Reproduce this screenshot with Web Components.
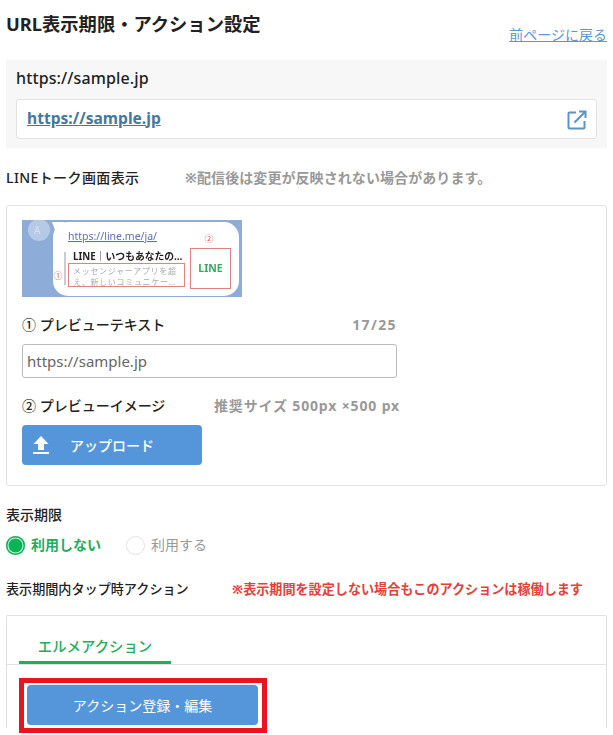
<!DOCTYPE html>
<html lang="ja">
<head>
<meta charset="utf-8">
<title>URL表示期限・アクション設定</title>
<style>
    html, body { margin: 0; background: #fff; }
    body {
        font-family: "Noto Sans", "Noto Sans CJK JP", sans-serif;
        color: #222;
        height: 735px;
        overflow: hidden;
    }
</style>
</head>
<body>
<url-settings></url-settings>
<script>
const FONT = '"Noto Sans", "Noto Sans CJK JP", sans-serif';

class PageHeader extends HTMLElement {
    constructor() {
        super();
        const shadow = this.attachShadow({ mode: 'open' });
        shadow.innerHTML = `
        <style>
            :host { display: flex; justify-content: space-between; height: 60px; }
            h1 { margin: 11px 0 0; font-size: 18.300px; line-height: 26px; font-weight: 700; color: #222; white-space: nowrap; }
            a { margin-top: 24px; font-size: 14px; line-height: 22px; color: #5b96d6; text-decoration: underline; }
        </style>
        <h1><slot></slot></h1>
        <a href="#">前ページに戻る</a>
        `;
    }
}

class UrlBox extends HTMLElement {
    constructor() {
        super();
        const shadow = this.attachShadow({ mode: 'open' });
        shadow.innerHTML = `
        <style>
            :host { display: block; background: #f7f7f7; height: 88px; padding: 0 10px; box-sizing: border-box; }
            .name { height: 39px; font-size: 16px; line-height: 36px; font-weight: 500; color: #222; letter-spacing: .12px; }
            .box { height: 40px; box-sizing: border-box; background: #fff; border: 1px solid #e2e2e2; border-radius: 3px;
                   display: flex; justify-content: space-between; align-items: center; padding: 0 9px 0 10px; }
            a { font-size: 15.600px; font-weight: 700; color: #44799f; text-decoration: underline; margin-top: -3px; }
            svg { display: block; margin-top: 2px; }
        </style>
        <div class="name"><slot></slot></div>
        <div class="box">
            <a href="#">https://sample.jp</a>
            <svg width="20" height="20" viewBox="0 0 20 20" fill="none" stroke="#5b93c9" stroke-width="2">
                <path d="M9 2.500H2.500a1 1 0 0 0-1 1V17.500a1 1 0 0 0 1 1H16.500a1 1 0 0 0 1-1V11"/>
                <path d="M12 1.500H18.500V8M18 2L7.500 12.500"/>
            </svg>
        </div>
        `;
    }
}

class SectionLabel extends HTMLElement {
    static get observedAttributes() { return ['note']; }
    constructor() {
        super();
        const shadow = this.attachShadow({ mode: 'open' });
        shadow.innerHTML = `
        <style>
            :host { display: flex; align-items: center; font-size: var(--label-size, 14px); font-weight: 500; color: #222; white-space: nowrap; }
            .label { width: var(--label-width, auto); letter-spacing: var(--label-spacing, 0); }
            .note { font-weight: 700; color: var(--note-color, #999); letter-spacing: var(--note-spacing, 0); }
        </style>
        <span class="label"><slot></slot></span>
        <span class="note"></span>
        `;
    }
    attributeChangedCallback(name, before, value) {
        this.shadowRoot.querySelector('.note').textContent = value;
    }
}

class PreviewPicture extends HTMLElement {
    constructor() {
        super();
        const shadow = this.attachShadow({ mode: 'open' });
        shadow.innerHTML = `
        <style>
            :host { display: block; width: 220px; height: 77px; overflow: hidden; }
            svg { display: block; filter: blur(.25px); }
            text { font-family: ${FONT}; }
            .desc { font-size: 8px; letter-spacing: .7px; fill: #aaa; }
        </style>
        <svg width="220" height="77" viewBox="0 0 220 77">
            <rect width="220" height="77" fill="#8eacd8"/>
            <circle cx="17" cy="10" r="11" fill="#b6cae8"/>
            <text x="12" y="14" font-size="10" fill="#d4e0f2">A</text>
            <path d="M30 2L43 2 33 10Z" fill="#fff"/>
            <rect x="31" y="2" width="186" height="74" rx="15" fill="#fff"/>
            <text x="46" y="20" font-size="10.500" fill="#5f6fb5" text-decoration="underline">https://line.me/ja/</text>
            <text x="187" y="22" font-size="9" fill="#d9665f" text-anchor="middle">②</text>
            <path d="M43 32V65" stroke="#999" stroke-width="1"/>
            <text x="51" y="40" font-size="9.800" font-weight="700" fill="#222">LINE｜いつもあなたの…</text>
            <rect x="46.500" y="43.500" width="116" height="23" fill="none" stroke="#e0837c"/>
            <text class="desc" x="51" y="53.500">メッセンジャーアプリを超</text>
            <text class="desc" x="51" y="64.500">え、新しいコミュニケー…</text>
            <text x="36" y="59" font-size="9" fill="#d9665f" text-anchor="middle">①</text>
            <rect x="168.500" y="28.500" width="40" height="40" fill="#fff" stroke="#e0837c"/>
            <text x="188.500" y="52" font-size="10.500" font-weight="700" fill="#2fae5b" text-anchor="middle">LINE</text>
        </svg>
        `;
    }
}

class LabelRow extends HTMLElement {
    constructor() {
        super();
        const shadow = this.attachShadow({ mode: 'open' });
        shadow.innerHTML = `
        <style>
            :host { display: flex; justify-content: space-between; width: var(--row-width, 375px); font-size: 14px; line-height: 22px; font-weight: 500; color: #222; white-space: nowrap; }
            .aside { font-size: 14px; font-weight: 700; color: #999; letter-spacing: var(--aside-spacing, 1.400px); }
        </style>
        <span><slot></slot></span>
        <span class="aside"><slot name="aside"></slot></span>
        `;
    }
}

class TextField extends HTMLElement {
    constructor() {
        super();
        const shadow = this.attachShadow({ mode: 'open' });
        shadow.innerHTML = `
        <style>
            :host { display: block; width: 375px; height: 34px; }
            input { box-sizing: border-box; width: 100%; height: 100%; margin: 0; padding: 0 4px; border: 1px solid #bbb; border-radius: 3px;
                    font: 15px ${FONT}; color: #666; outline: none; }
        </style>
        <input type="text" value="${this.getAttribute('value')}">
        `;
    }
}

class BlueButton extends HTMLElement {
    constructor() {
        super();
        const shadow = this.attachShadow({ mode: 'open' });
        shadow.innerHTML = `
        <style>
            :host { display: block; }
            button { box-sizing: border-box; width: 100%; height: 40px; border: 0; border-radius: 4px; background: #5596da; color: #fff;
                     font: var(--btn-weight, 400) 14px ${FONT}; display: flex; align-items: center; justify-content: var(--btn-justify, center);
                     padding: var(--btn-padding, 0); gap: var(--btn-gap, 0); }
            ::slotted(svg) { display: block; }
        </style>
        <button type="button"><slot name="icon"></slot><slot></slot></button>
        `;
    }
}

class RadioOption extends HTMLElement {
    constructor() {
        super();
        const shadow = this.attachShadow({ mode: 'open' });
        const on = this.hasAttribute('checked');
        shadow.innerHTML = `
        <style>
            :host { display: inline-flex; align-items: center; gap: 6px; font-size: 14px; line-height: 20px; }
            .dot { width: 19px; height: 19px; box-sizing: border-box; border-radius: 50%; }
            .on { background: #08b554; box-shadow: inset 0 0 0 1.500px #08b554, inset 0 0 0 2.500px #d4f2e1; }
            .off { background: #fff; border: 1.500px solid #e4e4e4; }
            span.text { color: ${on ? '#22ad5c' : '#999'}; font-weight: ${on ? 700 : 400}; }
        </style>
        <span class="dot ${on ? 'on' : 'off'}"></span>
        <span class="text"><slot></slot></span>
        `;
    }
}

class ActionPanel extends HTMLElement {
    constructor() {
        super();
        const shadow = this.attachShadow({ mode: 'open' });
        shadow.innerHTML = `
        <style>
            :host { display: block; border: 1px solid #e2e2e2; border-bottom: 0; height: 113px; box-sizing: border-box; border-radius: 2px 2px 0 0; }
            .tabs { height: 48px; border-bottom: 1px solid #e2e2e2; padding-left: 12px; }
            .tab { display: flex; align-items: center; justify-content: center; width: 152px; height: 31px; padding-top: 14px;
                   border-bottom: 3px solid #22ad5c; font-size: 14.400px; font-weight: 500; color: #22ad5c; }
            .body { padding: 13px 0 0 12px; }
            .mark { width: 248px; height: 55px; box-sizing: border-box; border: 5px solid #e8141f; padding: 2px 4px 0 3px; overflow: hidden; }
        </style>
        <div class="tabs"><div class="tab">エルメアクション</div></div>
        <div class="body"><div class="mark"><slot></slot></div></div>
        `;
    }
}

class UrlSettings extends HTMLElement {
    constructor() {
        super();
        const shadow = this.attachShadow({ mode: 'open' });
        shadow.innerHTML = `
        <style>
            :host { display: block; padding: 0 6px; width: 601px; }
            .line { margin-top: 18px; height: 22px; --label-width: 179px; --label-spacing: .4px; --note-spacing: .08px; }
            .card { margin-top: 17px; height: 281px; box-sizing: border-box; border: 1px solid #e2e2e2; border-radius: 3px; padding: 14px 15px 0; }
            .row1 { margin-top: 17px; }
            text-field { margin-top: 8px; }
            .row2 { margin-top: 17px; --row-width: 378px; --aside-spacing: .85px; }
            .upload { margin-top: 8px; width: 180px; --btn-justify: flex-start; --btn-padding: 0 0 0 11px; --btn-gap: 21px; --btn-weight: 500; }
            .limit { margin-top: 17px; height: 22px; }
            .radios { margin-top: 9px; display: flex; gap: 25px; height: 22px; align-items: center; }
            .tap { margin-top: 21px; height: 22px; --label-size: 13.100px; --label-width: 226px; --note-color: #e5403a; }
            action-panel { margin-top: 16px; }
        </style>
        <page-header>URL表示期限・アクション設定</page-header>
        <url-box>https://sample.jp</url-box>
        <section-label class="line" note="※配信後は変更が反映されない場合があります。">LINEトーク画面表示</section-label>
        <div class="card">
            <preview-picture></preview-picture>
            <label-row class="row1">① プレビューテキスト<span slot="aside">17/25</span></label-row>
            <text-field value="https://sample.jp"></text-field>
            <label-row class="row2">② プレビューイメージ<span slot="aside">推奨サイズ 500px ×500 px</span></label-row>
            <blue-button class="upload">
                <svg slot="icon" width="16" height="18" viewBox="0 0 16 18" fill="#fff">
                    <path d="M8 0L15.500 8H11V14H5V8H.5Z"/>
                    <rect y="16" width="16" height="2"/>
                </svg>
                <span>アップロード</span>
            </blue-button>
        </div>
        <section-label class="limit">表示期限</section-label>
        <div class="radios">
            <radio-option checked>利用しない</radio-option>
            <radio-option>利用する</radio-option>
        </div>
        <section-label class="tap" note="※表示期間を設定しない場合もこのアクションは稼働します">表示期間内タップ時アクション</section-label>
        <action-panel><blue-button>アクション登録・編集</blue-button></action-panel>
        `;
    }
}

customElements.define('page-header', PageHeader);
customElements.define('url-box', UrlBox);
customElements.define('section-label', SectionLabel);
customElements.define('preview-picture', PreviewPicture);
customElements.define('label-row', LabelRow);
customElements.define('text-field', TextField);
customElements.define('blue-button', BlueButton);
customElements.define('radio-option', RadioOption);
customElements.define('action-panel', ActionPanel);
customElements.define('url-settings', UrlSettings);
</script>
</body>
</html>
